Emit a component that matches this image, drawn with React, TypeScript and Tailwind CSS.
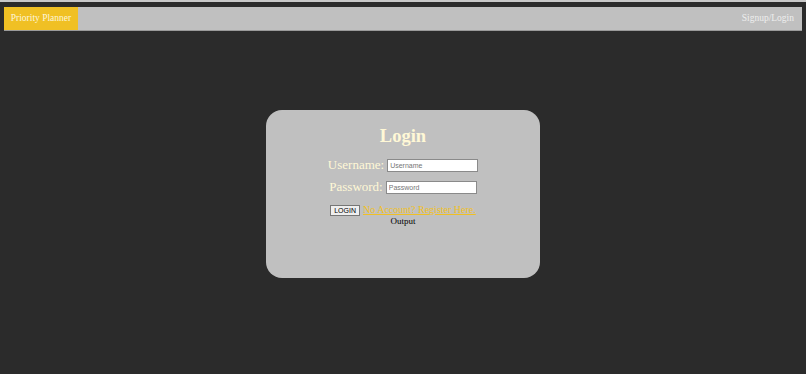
export default function App() {
  return (
    <main className="min-h-[374px] bg-[#2b2b2b] font-['Liberation_Serif',serif]">
      <div className="h-[2px] bg-[#c8c8c8]" />
      <nav className="mx-[4px] mt-[5px] flex h-[24px] items-center justify-between border-b border-[#9a9a9a] bg-[#c0c0c0]">
        <div className="flex h-full w-[74px] items-center justify-center bg-[#f0c024] text-[9.5px] text-[#fdf6dc]">
          Priority Planner
        </div>
        <a className="pr-[8px] text-[9.5px] text-[#eeeeee]">Signup/Login</a>
      </nav>

      <section className="mx-auto mt-[79px] flex h-[168px] w-[274px] flex-col items-center rounded-[16px] bg-[#c0c0c0] pt-[14px]">
        <h1 className="text-[18.5px] font-bold leading-[24px] text-[#fff8d6]">Login</h1>
        <div className="mt-[9px] flex items-center gap-[3px]">
          <label className="text-[13px] leading-[16px] text-[#fff8d6]">Username:</label>
          <input
            placeholder="Username"
            className="h-[13px] w-[91px] border border-[#8a8a8a] bg-white px-[2px] font-['Liberation_Sans',sans-serif] text-[7px] placeholder:text-[#757575]"
          />
        </div>
        <div className="mt-[6px] flex items-center gap-[3px]">
          <label className="text-[13px] leading-[16px] text-[#fff8d6]">Password:</label>
          <input
            type="password"
            placeholder="Password"
            className="h-[13px] w-[91px] border border-[#8a8a8a] bg-white px-[2px] font-['Liberation_Sans',sans-serif] text-[7px] placeholder:text-[#757575]"
          />
        </div>
        <div className="mt-[9px] flex items-center gap-[3px]">
          <button className="h-[11px] border border-[#767676] bg-[#efefef] px-[3px] font-['Liberation_Sans',sans-serif] text-[7px] leading-[9px] text-black">
            LOGIN
          </button>
          <a className="text-[10px] leading-[12px] text-[#f0c024] underline">No Account? Register Here.</a>
        </div>
        <div className="mt-[0px] text-[9px] font-normal leading-[11px] text-black">Output</div>
      </section>
    </main>
  );
}
